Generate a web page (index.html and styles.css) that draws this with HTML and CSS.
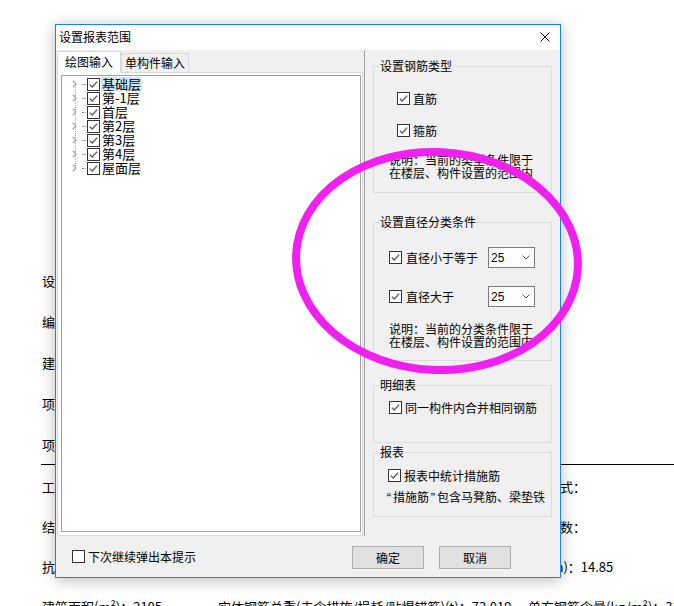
FILE: index.html
```html
<!DOCTYPE html>
<html lang="zh-CN">
<head>
    <meta charset="UTF-8">
    <meta name="viewport" content="width=device-width, initial-scale=1.0">
    <title>设置报表范围</title>
    <link rel="stylesheet" href="styles.css">
</head>
<body>
    <!-- 背景: 工程信息 -->
    <div class="page">
        <div class="info-top">
            <div class="info-row">设计单位：</div>
            <div class="info-row">编制单位：</div>
            <div class="info-row">建设单位：</div>
            <div class="info-row">项目名称：</div>
            <div class="info-row">项目代号：</div>
        </div>
        <hr class="info-line">
        <div class="info-bottom">
            <div class="info-row"><span class="col-a">工程类别：</span><span>基础形式：</span></div>
            <div class="info-row"><span class="col-a">结构类型：</span><span>地上层数：</span></div>
            <div class="info-row"><span class="col-a">抗震等级：</span><span>檐高(m)：14.85</span></div>
            <div class="info-row"><span class="col-a2">建筑面积(m²)：2105</span><span class="col-b">实体钢筋总重(未含措施/损耗/贴焊锚筋)(t)：73.019</span><span>单方钢筋含量(kg/m²)：33.4</span></div>
        </div>
    </div>

    <!-- 对话框 -->
    <div class="dialog">
        <div class="dialog-title">
            <span>设置报表范围</span>
            <svg class="close" width="10" height="10" viewBox="0 0 10 10"><path d="M0.5 0.5L9.5 9.5M9.5 0.5L0.5 9.5" stroke="#000" stroke-width="1" fill="none"/></svg>
        </div>

        <div class="dialog-body">
            <div class="pane-left">
                <div class="tabs">
                    <div class="tab active">绘图输入</div>
                    <div class="tab">单构件输入</div>
                </div>
                <div class="tab-panel">
                    <div class="tree-box">
                        <ul class="tree">
                            <li class="tree-item">
                                <svg class="arrow" width="5" height="8" viewBox="0 0 5 8"><polyline points="0.8,0.8 4,4 0.8,7.2" fill="none" stroke="#a6a6a6" stroke-width="1.3"/></svg>
                                <span class="dots"></span>
                                <span class="cb"><svg width="11" height="11" viewBox="0 0 11 11"><polyline points="1.8,5.6 4.2,8 9.2,2.6" fill="none" stroke="#555" stroke-width="1.3"/></svg></span>
                                <span class="tree-text selected">基础层</span>
                            </li>
                            <li class="tree-item">
                                <svg class="arrow" width="5" height="8" viewBox="0 0 5 8"><polyline points="0.8,0.8 4,4 0.8,7.2" fill="none" stroke="#a6a6a6" stroke-width="1.3"/></svg>
                                <span class="dots"></span>
                                <span class="cb"><svg width="11" height="11" viewBox="0 0 11 11"><polyline points="1.8,5.6 4.2,8 9.2,2.6" fill="none" stroke="#555" stroke-width="1.3"/></svg></span>
                                <span class="tree-text">第-1层</span>
                            </li>
                            <li class="tree-item">
                                <svg class="arrow" width="5" height="8" viewBox="0 0 5 8"><polyline points="0.8,0.8 4,4 0.8,7.2" fill="none" stroke="#a6a6a6" stroke-width="1.3"/></svg>
                                <span class="dots"></span>
                                <span class="cb"><svg width="11" height="11" viewBox="0 0 11 11"><polyline points="1.8,5.6 4.2,8 9.2,2.6" fill="none" stroke="#555" stroke-width="1.3"/></svg></span>
                                <span class="tree-text">首层</span>
                            </li>
                            <li class="tree-item">
                                <svg class="arrow" width="5" height="8" viewBox="0 0 5 8"><polyline points="0.8,0.8 4,4 0.8,7.2" fill="none" stroke="#a6a6a6" stroke-width="1.3"/></svg>
                                <span class="dots"></span>
                                <span class="cb"><svg width="11" height="11" viewBox="0 0 11 11"><polyline points="1.8,5.6 4.2,8 9.2,2.6" fill="none" stroke="#555" stroke-width="1.3"/></svg></span>
                                <span class="tree-text">第2层</span>
                            </li>
                            <li class="tree-item">
                                <svg class="arrow" width="5" height="8" viewBox="0 0 5 8"><polyline points="0.8,0.8 4,4 0.8,7.2" fill="none" stroke="#a6a6a6" stroke-width="1.3"/></svg>
                                <span class="dots"></span>
                                <span class="cb"><svg width="11" height="11" viewBox="0 0 11 11"><polyline points="1.8,5.6 4.2,8 9.2,2.6" fill="none" stroke="#555" stroke-width="1.3"/></svg></span>
                                <span class="tree-text">第3层</span>
                            </li>
                            <li class="tree-item">
                                <svg class="arrow" width="5" height="8" viewBox="0 0 5 8"><polyline points="0.8,0.8 4,4 0.8,7.2" fill="none" stroke="#a6a6a6" stroke-width="1.3"/></svg>
                                <span class="dots"></span>
                                <span class="cb"><svg width="11" height="11" viewBox="0 0 11 11"><polyline points="1.8,5.6 4.2,8 9.2,2.6" fill="none" stroke="#555" stroke-width="1.3"/></svg></span>
                                <span class="tree-text">第4层</span>
                            </li>
                            <li class="tree-item">
                                <svg class="arrow" width="5" height="8" viewBox="0 0 5 8"><polyline points="0.8,0.8 4,4 0.8,7.2" fill="none" stroke="#a6a6a6" stroke-width="1.3"/></svg>
                                <span class="dots"></span>
                                <span class="cb"><svg width="11" height="11" viewBox="0 0 11 11"><polyline points="1.8,5.6 4.2,8 9.2,2.6" fill="none" stroke="#555" stroke-width="1.3"/></svg></span>
                                <span class="tree-text">屋面层</span>
                            </li>
                        </ul>
                    </div>
                </div>
            </div>

            <div class="pane-sep"></div>

            <div class="pane-right">
                <fieldset class="group g-type">
                    <legend>设置钢筋类型</legend>
                    <div class="check-row">
                        <span class="cb"><svg width="11" height="11" viewBox="0 0 11 11"><polyline points="1.8,5.6 4.2,8 9.2,2.6" fill="none" stroke="#555" stroke-width="1.3"/></svg></span>
                        <span>直筋</span>
                    </div>
                    <div class="check-row">
                        <span class="cb"><svg width="11" height="11" viewBox="0 0 11 11"><polyline points="1.8,5.6 4.2,8 9.2,2.6" fill="none" stroke="#555" stroke-width="1.3"/></svg></span>
                        <span>箍筋</span>
                    </div>
                    <p class="note">说明：当前的类型条件限于<br>在楼层、构件设置的范围内</p>
                </fieldset>

                <fieldset class="group g-dia">
                    <legend>设置直径分类条件</legend>
                    <div class="check-row">
                        <label class="check-label">
                            <span class="cb"><svg width="11" height="11" viewBox="0 0 11 11"><polyline points="1.8,5.6 4.2,8 9.2,2.6" fill="none" stroke="#555" stroke-width="1.3"/></svg></span>
                            <span>直径小于等于</span>
                        </label>
                        <div class="combo">
                            <span>25</span>
                            <svg width="8" height="5" viewBox="0 0 8 5"><polyline points="0.5,0.5 4,4 7.5,0.5" fill="none" stroke="#555" stroke-width="1"/></svg>
                        </div>
                    </div>
                    <div class="check-row">
                        <label class="check-label">
                            <span class="cb"><svg width="11" height="11" viewBox="0 0 11 11"><polyline points="1.8,5.6 4.2,8 9.2,2.6" fill="none" stroke="#555" stroke-width="1.3"/></svg></span>
                            <span>直径大于</span>
                        </label>
                        <div class="combo">
                            <span>25</span>
                            <svg width="8" height="5" viewBox="0 0 8 5"><polyline points="0.5,0.5 4,4 7.5,0.5" fill="none" stroke="#555" stroke-width="1"/></svg>
                        </div>
                    </div>
                    <p class="note">说明：当前的分类条件限于<br>在楼层、构件设置的范围内</p>
                </fieldset>

                <fieldset class="group g-detail">
                    <legend>明细表</legend>
                    <div class="check-row">
                        <span class="cb"><svg width="11" height="11" viewBox="0 0 11 11"><polyline points="1.8,5.6 4.2,8 9.2,2.6" fill="none" stroke="#555" stroke-width="1.3"/></svg></span>
                        <span>同一构件内合并相同钢筋</span>
                    </div>
                </fieldset>

                <fieldset class="group g-report">
                    <legend>报表</legend>
                    <div class="check-row">
                        <span class="cb"><svg width="11" height="11" viewBox="0 0 11 11"><polyline points="1.8,5.6 4.2,8 9.2,2.6" fill="none" stroke="#555" stroke-width="1.3"/></svg></span>
                        <span>报表中统计措施筋</span>
                    </div>
                    <p class="note"><span class="quote">“</span>措施筋<span class="quote">”</span>包含马凳筋、梁垫铁</p>
                </fieldset>
            </div>
        </div>

        <div class="dialog-foot">
            <span class="cb"></span>
            <span class="foot-text">下次继续弹出本提示</span>
            <button class="btn first">确定</button>
            <button class="btn">取消</button>
        </div>
    </div>

    <!-- 标注圈 -->
    <svg class="mark" width="674" height="606" viewBox="0 0 674 606">
        <ellipse cx="437" cy="261" rx="141" ry="109" transform="rotate(3 437 261)" fill="none" stroke="#f020f0" stroke-width="8"/>
    </svg>
</body>
</html>
```

FILE: styles.css
```css
html, body {
    margin: 0;
    padding: 0;
    width: 674px;
    height: 606px;
    overflow: hidden;
    background: #ffffff;
}

body {
    position: relative;
    font-family: "Noto Sans CJK SC", sans-serif;
    font-size: 13px;
    color: #000;
}

/* 背景 */
.page {
    white-space: nowrap;
}

.info-top {
    padding: 260px 0 0 42px;
}

.info-top .info-row {
    height: 41px;
    line-height: 41px;
}

.info-line {
    margin: -1px 0 0 41px;
    border: none;
    border-top: 1px solid #000;
    height: 0;
}

.info-bottom {
    padding: 2px 0 0 42px;
}

.info-bottom .info-row {
    display: flex;
    height: 40px;
    line-height: 40px;
}

.info-row span {
    flex: none;
}

.col-a {
    width: 479px;
}

.col-a2 {
    width: 176px;
}

.col-b {
    width: 310px;
}

/* 对话框 */
.dialog {
    position: absolute;
    left: 55px;
    top: 24px;
    width: 506px;
    box-sizing: border-box;
    border: 1px solid #1c84d8;
    background: #f0f0f0;
    box-shadow: 0 2px 14px rgba(0, 0, 0, 0.28);
    font-size: 12px;
}

.dialog-title {
    display: flex;
    justify-content: space-between;
    align-items: center;
    height: 25px;
    box-sizing: border-box;
    padding: 0 10px 2px 3px;
    background: #ffffff;
}

.dialog-body {
    display: flex;
    height: 486px;
}

.pane-left {
    width: 306px;
    padding: 1px 0 0 1px;
    display: flex;
    flex-direction: column;
}

.tabs {
    display: flex;
    align-items: flex-end;
    height: 21px;
}

.tab {
    box-sizing: border-box;
    border: 1px solid #d9d9d9;
    border-bottom: none;
    text-align: center;
    line-height: 18px;
    background: #f0f0f0;
}

.tab.active {
    width: 64px;
    height: 22px;
    line-height: 20px;
    margin-bottom: -1px;
    background: #ffffff;
    position: relative;
    z-index: 1;
}

.tab + .tab {
    width: 68px;
    height: 19px;
}

.tab-panel {
    flex: 1;
    display: flex;
    box-sizing: border-box;
    border: 1px solid #d9d9d9;
    background: #ffffff;
    padding: 2px 1px 3px 3px;
}

.tree-box {
    flex: 1;
    border: 1px solid #a0a0a0;
    background: #ffffff;
}

.tree {
    list-style: none;
    margin: 0;
    padding: 1px 0 0 0;
    position: relative;
    font-size: 13px;
}

.tree::before {
    content: "";
    position: absolute;
    left: 13px;
    top: 9px;
    bottom: 7px;
    border-left: 1px dotted #a0a0a0;
}

.tree-item {
    display: flex;
    align-items: center;
    height: 14px;
    padding-left: 10px;
}

.arrow {
    position: relative;
    flex: none;
}

.dots {
    width: 4px;
    margin: 0 1px 0 5px;
    border-top: 1px dotted #909090;
}

.tree-text {
    margin-left: 1px;
    padding: 0 1px;
    line-height: 14px;
}

.tree-text.selected {
    background: #cce8ff;
}

.cb {
    flex: none;
    display: inline-flex;
    width: 13px;
    height: 13px;
    box-sizing: border-box;
    border: 1px solid #333;
    background: #ffffff;
}

.pane-sep {
    width: 1px;
    margin-left: 1px;
    background: #a0a0a0;
}

.pane-right {
    width: 195px;
    box-sizing: border-box;
    padding: 9px 8px 0 8px;
}

.group {
    margin: 0;
    padding: 0;
    min-inline-size: 0;
    border: 1px solid #dcdcdc;
}

.group legend {
    margin-left: 5px;
    padding: 0 1px;
    line-height: 14px;
}

.check-row {
    display: flex;
    align-items: center;
    gap: 3px;
    height: 14px;
    padding-left: 15px;
}

.note {
    margin: 0;
    padding-left: 15px;
    line-height: 13px;
    white-space: nowrap;
}

.g-type .check-row {
    padding-left: 23px;
    margin-top: 18px;
}

.g-type .note {
    margin-top: 16px;
    padding-bottom: 13px;
}

.g-dia {
    margin-top: 22px;
}

.g-dia .check-row {
    gap: 0;
    height: 21px;
    margin-top: 18px;
}

.check-label {
    display: flex;
    align-items: center;
    gap: 4px;
    width: 99px;
}

.combo {
    display: flex;
    align-items: center;
    justify-content: space-between;
    width: 47px;
    height: 21px;
    box-sizing: border-box;
    border: 1px solid #7a7a7a;
    background: #ffffff;
    padding: 0 4px 0 2px;
    font-family: "Liberation Sans", sans-serif;
    font-size: 12px;
}

.g-dia .note {
    margin-top: 15px;
    padding-bottom: 12px;
}

.g-detail {
    margin-top: 17px;
    padding-bottom: 28px;
}

.g-detail .check-row {
    margin-top: 8px;
}

.g-report {
    margin-top: 2px;
}

.g-report .check-row {
    padding-left: 14px;
    margin-top: 9px;
}

.g-report .note {
    padding-left: 11px;
    margin-top: 8px;
    line-height: 14px;
    padding-bottom: 11px;
}

.quote {
    display: inline-block;
    width: 8px;
    text-align: center;
    font-family: "Liberation Sans", sans-serif;
    font-size: 13px;
}

.dialog-foot {
    display: flex;
    align-items: center;
    height: 41px;
    padding: 0 49px 0 16px;
}

.foot-text {
    margin-left: 3px;
}

.btn {
    width: 72px;
    height: 23px;
    margin-top: 2px;
    border: 1px solid #adadad;
    background: #e1e1e1;
    font-family: "Noto Sans CJK SC", sans-serif;
    font-size: 12px;
    color: #000;
    padding: 0;
}

.btn.first {
    margin-left: auto;
}

.btn + .btn {
    margin-left: 15px;
}

/* 标注圈 */
.mark {
    position: absolute;
    left: 0;
    top: 0;
    pointer-events: none;
}
```
